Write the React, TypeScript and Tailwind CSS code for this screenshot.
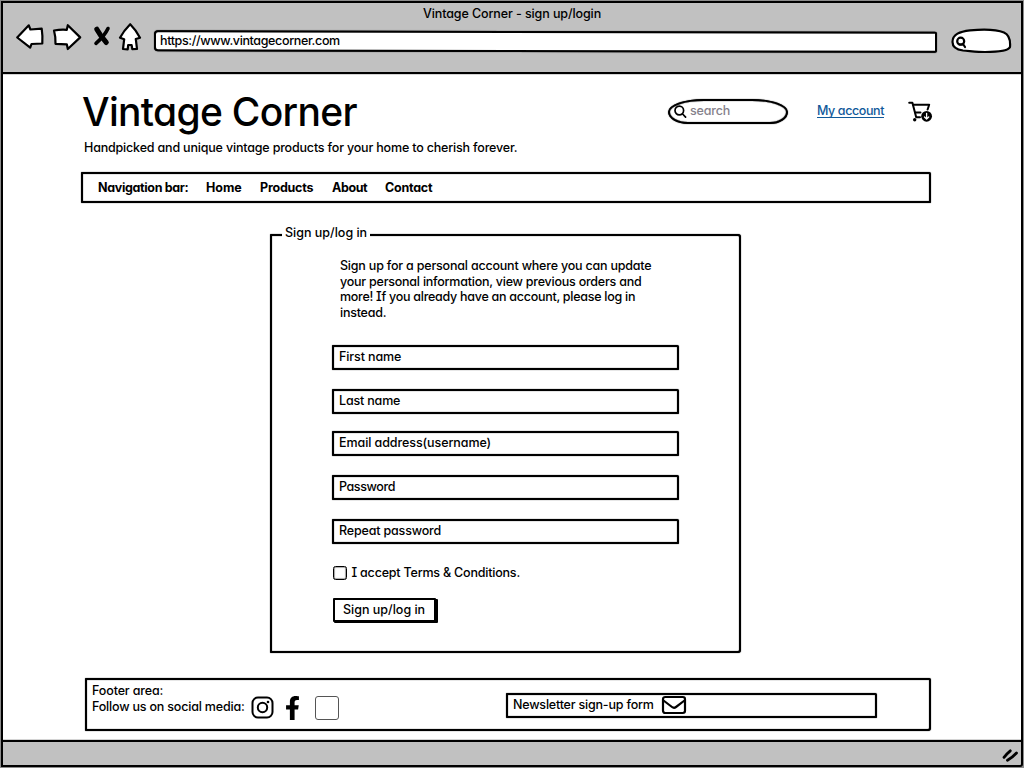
import type { ReactNode } from 'react';
import { FaFacebookF } from 'react-icons/fa';

const fields = [
  { label: 'First name', tracking: 'tracking-[-0.11px]', gap: '' },
  { label: 'Last name', tracking: 'tracking-[-0.17px]', gap: 'mt-[19px]' },
  { label: 'Email address(username)', tracking: 'tracking-[-0.08px]', gap: 'mt-[17px]' },
  { label: 'Password', tracking: 'tracking-[-0.4px]', gap: 'mt-[19px]' },
  { label: 'Repeat password', tracking: 'tracking-[-0.17px]', gap: 'mt-[19px]' },
];

const links = [
  { label: 'Home', className: 'ml-[18px] w-9 tracking-[-0.06px]' },
  { label: 'Products', className: 'ml-[18px] w-[54px] tracking-[-0.22px]' },
  { label: 'About', className: 'ml-[18px] w-[35px] tracking-[-0.4px]' },
  { label: 'Contact', className: 'ml-[18px] tracking-[-0.25px]' },
];

function Frame({ className, children }: { className: string; children?: ReactNode }) {
  return (
    <div className={`border-2 border-black bg-white shadow-[0_0_1px_#000,inset_0_0_1px_#000] ${className}`}>{children}</div>
  );
}

function BrowserBar() {
  return (
    <header className="h-[71px] shrink-0 border-b-2 border-black bg-[#c1c1c1] shadow-[0_0_1px_#000]">
      <div className="pt-[3px] text-center leading-4 tracking-[-0.1px]">Vintage Corner - sign up/login</div>
      <div className="flex items-start">
        <svg className="mt-px ml-[9px] h-7 w-[132px] shrink-0" viewBox="12 23 132 28" fill="#fff" stroke="#000" strokeWidth="2.200" strokeLinejoin="round" strokeLinecap="round">
          <path d="M17.200 37.500 28.800 25.300 30.400 29.500 41.700 28.600Q42.800 36 42.300 43.500L31.500 44 30.200 47.700Z" />
          <path d="M54 30.500Q61 29.200 66.800 29.800L67.800 25.200 80.200 37.400 67.800 49 66.800 44.300 55.500 43.800Q55.800 37 54 30.500Z" />
          <path d="M130.200 24.200Q136 30 140 37.700L135.800 39 137 48.800 132.300 49.100 131.600 45 128.200 45 127.700 49.300 123 49 124.200 39.200 120 37.700Q123.500 31 130.200 24.200Z" />
          <path d="M96.800 29.200Q100.500 36 106.300 42.500" fill="none" strokeWidth="5" />
          <path d="M108 28.500Q104.500 36 96 43.300" fill="none" strokeWidth="3.600" />
        </svg>
        <div className="relative mt-[9px] ml-[10px] h-[21px] w-[783px] shrink-0">
          <div className="absolute inset-0 skew-y-[0.1deg] rounded-[4px_2px_2px_4px] border-2 border-black bg-white shadow-[0_0_1px_#000]" />
          <span className="relative block pt-[2px] pl-[6px] leading-4 tracking-[-0.36px]">https://www.vintagecorner.com</span>
        </div>
        <svg className="mt-[5px] ml-[14px] h-[28px] w-[62px] shrink-0" viewBox="951 27 62 28" fill="#fff" stroke="#000" strokeWidth="2.200" strokeLinecap="round">
          <path d="M952.500 42C952.500 34 960 31.500 970 30.300C984 29 998 30 1004 32.500C1009.500 35 1010.500 41 1010 47C1008.500 50.500 998 52 985 52C978 52 970 51 963 50.500C955.500 49.500 952.500 46 952.500 42Z" />
          <circle cx="960.700" cy="41.200" r="3.500" />
          <path d="M963 44 965 47M959.500 44.500H963" />
        </svg>
      </div>
    </header>
  );
}

function CartIcon() {
  return (
    <svg className="mt-px ml-[23px] h-[23px] w-[26px]" viewBox="907 100 26 23" fill="none" stroke="#000" strokeWidth="2" strokeLinejoin="round" strokeLinecap="round">
      <path d="M909.200 102.700H912.400L916.200 117.300H920" />
      <path d="M913.200 104.800H929.200L927.600 109.500" />
      <path d="M915.300 112.500H920.500" />
      <circle cx="914.700" cy="119.800" r="1.700" fill="#000" stroke="none" />
      <circle cx="926.600" cy="116.300" r="5.400" fill="#000" stroke="none" />
      <path d="M926.600 113.300V118.800M924.500 117 926.600 119 928.700 117" stroke="#fff" strokeWidth="1.300" />
    </svg>
  );
}

export default function App() {
  return (
    <div className="h-[768px] w-[1024px] overflow-hidden bg-[#8c8c8c] p-px font-['Inter',sans-serif] text-[12.5px] font-medium text-black [font-feature-settings:'cv11','cv08']">
      <div className="flex h-[766px] w-[1022px] flex-col overflow-hidden rounded-br-[3px] border-2 border-black bg-white">
        <BrowserBar />

        <main className="h-[666px] shrink-0 pl-[77px]">
          <div className="flex h-[98px] items-start">
            <div className="w-[588px]">
              <h1 className="pt-[12px] pl-[2px] text-[39px] leading-[52px] font-medium tracking-[-0.7px] whitespace-nowrap">Vintage Corner</h1>
              <p className="mt-[2px] ml-1 leading-4 tracking-[-0.18px]">Handpicked and unique vintage products for your home to cherish forever.</p>
            </div>
            <div className="flex items-start pt-[25px]">
              <Frame className="flex h-[25px] w-[120px] items-start rounded-[36px_36px_18px_20px/13px_13px_12px_12px]">
                <svg className="mt-[4px] ml-[4px] h-[14px] w-[14px]" viewBox="0 0 14 14" fill="none" stroke="#000" strokeWidth="1.700" strokeLinecap="round">
                  <circle cx="5.300" cy="5.500" r="4.300" />
                  <path d="M8.600 9 11.600 12.200" />
                </svg>
                <span className="ml-[2px] pt-[2px] leading-4 tracking-[-0.15px] text-[#85818b]">search</span>
              </Frame>
              <a className="mt-[4px] ml-[29px] block h-[15px] w-[67px] border-b border-[#10599a] leading-4 tracking-[-0.4px] whitespace-nowrap text-[#10599a]">My account</a>
              <CartIcon />
            </div>
          </div>

          <Frame className="ml-px flex h-[31px] w-[850px] rounded-[1px_2px_1px_1px]">
            <nav className="flex pt-[6px] pl-[15px] leading-4 font-bold whitespace-nowrap">
              <span className="w-[90px] tracking-[-0.34px]">Navigation bar:</span>
              {links.map((l) => (
                <a key={l.label} className={l.className}>{l.label}</a>
              ))}
            </nav>
          </Frame>

          <Frame className="mt-[31px] ml-[190px] h-[419px] w-[471px] rounded-[1px_3px_3px_1px]">
            <div className="relative -mt-[11px] ml-[10px] h-[18px] w-[88px] bg-white pl-[3px] leading-4 whitespace-nowrap">Sign up/log in</div>
            <p className="mt-[15px] ml-[68px] leading-[15.670px] whitespace-nowrap">
              <span className="block tracking-[-0.2px]">Sign up for a personal account where you can update</span>
              <span className="block tracking-[-0.23px]">your personal information, view previous orders and</span>
              <span className="block tracking-[-0.27px]">more! If you already have an account, please log in</span>
              <span className="block tracking-[-0.23px]">instead.</span>
            </p>
            <div className="mt-[24px] ml-[60px] flex w-[347px] flex-col">
              {fields.map((f) => (
                <Frame key={f.label} className={`h-[25px] rounded-[1px_2px_1px_1px] pt-[2px] pl-[5px] leading-4 ${f.gap} ${f.tracking}`}>{f.label}</Frame>
              ))}
            </div>
            <label className="mt-[21px] ml-[61px] flex h-4 items-center">
              <span className="h-[14px] w-[14px] rounded-[2.500px] border-[1.500px] border-black shadow-[inset_0_0_1px_0.300px_#000]" />
              <span className="ml-[4.500px] leading-4 tracking-[-0.2px]">I accept Terms &amp; Conditions.</span>
            </label>
            <button className="mt-[17px] ml-[61px] flex h-[24px] w-[103px] items-start rounded-[1px] border-2 border-black bg-white pt-[2px] pl-[8px] leading-4 whitespace-nowrap shadow-[1px_1px_0_#000,2px_1px_0_#000]">Sign up/log in</button>
          </Frame>

          <Frame className="mt-[25px] ml-[5px] flex h-[53px] w-[846px] items-start rounded-[1px_2px_3px_1px]">
            <p className="w-[160px] pt-[3px] pl-[5px] leading-4 whitespace-nowrap">
              <span className="block tracking-[-0.13px]">Footer area:</span>
              <span className="block tracking-[-0.19px]">Follow us on social media:</span>
            </p>
            <div className="flex w-[259px] items-start pt-[16px] pl-[4px]">
              <svg className="h-[23px] w-[23px]" viewBox="0 0 23 23" fill="none" stroke="#000" strokeWidth="2">
                <rect x="1.500" y="1.500" width="20" height="20" rx="5.500" />
                <circle cx="11.500" cy="11.500" r="4.700" />
                <circle cx="17" cy="6" r="1.300" fill="#000" stroke="none" />
              </svg>
              <FaFacebookF className="ml-[11px] h-6 w-[15px]" />
              <span className="ml-[15px] h-6 w-6 rounded-[3px] border border-[#555]" />
            </div>
            <Frame className="mt-[13px] flex h-[25px] w-[371px] rounded-[1px_2px_1px_1px]">
              <span className="w-[148px] pt-[2px] pl-[5px] leading-4 tracking-[-0.2px] whitespace-nowrap">Newsletter sign-up form</span>
              <svg className="ml-[5px] h-[20px] w-[26px]" viewBox="0 0 26 20" fill="none" stroke="#000" strokeWidth="2.200" strokeLinejoin="round">
                <rect x="2" y="2" width="22" height="16" rx="2.200" />
                <path d="M2.500 5.500 11 12Q13 13.500 15 12L23.500 5.500" />
              </svg>
            </Frame>
          </Frame>
        </main>

        <div className="flex flex-1 items-start justify-end border-t-2 border-black bg-[#c1c1c1] shadow-[0_0_1px_#000]">
          <svg className="mt-[6px] mr-[2px] h-[14px] w-[19px]" viewBox="1000 748 19 14" fill="none" stroke="#000" strokeWidth="2.800" strokeLinecap="round">
            <path d="M1004 757.300Q1007 753.500 1010.300 750.800M1007.500 760.300Q1012 757.800 1016.500 753" />
          </svg>
        </div>
      </div>
    </div>
  );
}
